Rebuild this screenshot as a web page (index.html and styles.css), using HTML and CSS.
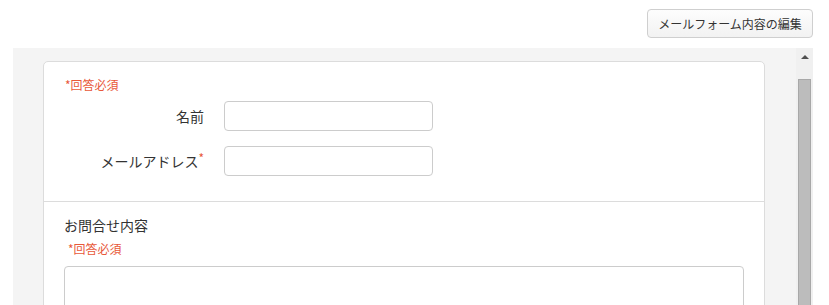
FILE: index.html
```html
<!DOCTYPE html>
<html lang="ja">
<head>
<meta charset="utf-8">
<title>メールフォーム</title>
<link rel="stylesheet" href="styles.css">
</head>
<body>
<div class="topbar">
  <button class="edit-btn" type="button">メールフォーム内容の編集</button>
</div>
<div class="panel">
  <div class="panel-body">
    <div class="card">
      <section class="section">
        <div class="required">*回答必須</div>
        <div class="row">
          <label class="label">名前</label>
          <input class="input" type="text">
        </div>
        <div class="row">
          <label class="label">メールアドレス<span class="star">*</span></label>
          <input class="input" type="text">
        </div>
      </section>
      <section class="section section-2">
        <div class="title">お問合せ内容</div>
        <div class="required required-2">*回答必須</div>
        <textarea class="textarea"></textarea>
      </section>
    </div>
  </div>
  <div class="scrollbar">
    <div class="scroll-up"><span class="arrow"></span></div>
    <div class="thumb"></div>
  </div>
</div>
</body>
</html>
```
FILE: styles.css
```css
html, body {
  margin: 0;
  padding: 0;
  background: #fff;
  font-family: "Noto Sans CJK JP", "Liberation Sans", sans-serif;
  color: #333;
  overflow: hidden;
}

.topbar {
  display: flex;
  justify-content: flex-end;
  padding: 9px 16px 10px 0;
}

.edit-btn {
  height: 29px;
  width: 166px;
  padding: 0;
  border: 1px solid #cfcfcf;
  border-radius: 4px;
  background: linear-gradient(#fdfdfd, #f2f2f2);
  font-family: inherit;
  font-size: 12px;
  color: #333;
  line-height: 27px;
}

.panel {
  display: flex;
  margin-left: 13px;
  margin-right: 16px;
  height: 257px;
  background: #f4f4f4;
}

.panel-body {
  flex: 1;
  padding: 13px 31px 0 30px;
}

.card {
  background: #fff;
  border: 1px solid #dcdcdc;
  border-radius: 5px;
  height: 400px;
}

.section {
  padding: 15px 20px 0 21px;
  height: 124px;
  border-bottom: 1px solid #dcdcdc;
}

.required {
  color: #e8583a;
  font-size: 12px;
  line-height: 16px;
}

.row {
  display: flex;
  align-items: center;
  margin-top: 8px;
}

.row + .row {
  margin-top: 15px;
}

.label {
  width: 139px;
  text-align: right;
  font-size: 14px;
  color: #333;
}

.star {
  color: #e8583a;
  font-size: 12px;
  vertical-align: top;
  position: relative;
  top: -2px;
}

.input {
  margin-left: 20px;
  width: 209px;
  box-sizing: border-box;
  height: 30px;
  border: 1px solid #cccccc;
  border-radius: 4px;
  background: #fff;
  padding: 0 6px;
}

.section-2 {
  border-bottom: none;
  padding: 14px 20px 0 20px;
}

.title {
  font-size: 14px;
  line-height: 18px;
}

.required-2 {
  margin-top: 7px;
  padding-left: 4px;
}

.textarea {
  display: block;
  margin-top: 9px;
  width: 100%;
  height: 80px;
  box-sizing: border-box;
  border: 1px solid #cccccc;
  border-radius: 4px;
  resize: none;
  background: #fff;
}

.scrollbar {
  width: 17px;
  background: #f0f0f0;
  display: flex;
  flex-direction: column;
  align-items: center;
}

.scroll-up {
  height: 31px;
  width: 17px;
  display: flex;
  justify-content: center;
  padding-top: 7px;
  box-sizing: border-box;
}

.arrow {
  width: 0;
  height: 0;
  border-left: 4px solid transparent;
  border-right: 4px solid transparent;
  border-bottom: 4px solid #505050;
}

.thumb {
  width: 13px;
  flex: 1;
  box-sizing: border-box;
  background: #bcbcbc;
  border: 1px solid #a8a8a8;
  border-bottom: none;
}
```
